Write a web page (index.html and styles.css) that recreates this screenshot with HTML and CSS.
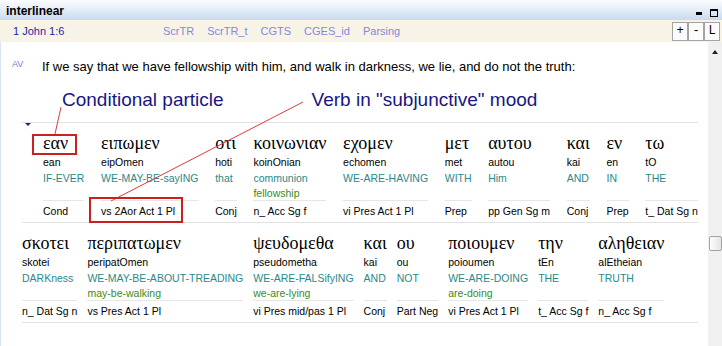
FILE: index.html
```html
<!DOCTYPE html>
<html>
<head>
<meta charset="utf-8">
<title>interlinear</title>
<link rel="stylesheet" href="styles.css">
</head>
<body>
<div class="panel">
  <div class="titlebar">
    <span class="title">interlinear</span>
    <span class="winbtns"><i class="wmin"></i><i class="wmax"></i></span>
  </div>
  <div class="toolbar">
    <span class="ref">1 John 1:6</span>
    <nav class="tabs">
      <span>ScrTR</span><span>ScrTR_t</span><span>CGTS</span><span>CGES_id</span><span>Parsing</span>
    </nav>
    <div class="zbtns"><span class="zb">+</span><span class="zb">-</span><span class="zb">L</span></div>
  </div>
  <div class="main">
    <div class="content">
      <div class="verse"><span class="av">AV</span><span class="vtext">If we say that we have fellowship with him, and walk in darkness, we lie, and do not the truth:</span></div>
      <div class="labels"><span class="lab">Conditional particle</span><span class="lab lab2">Verb in "subjunctive" mood</span></div>
      <div class="inter">
        <div class="row row1">
          <div class="col"><div class="gk">εαν</div><div class="tr">ean</div><div class="gl">IF-EVER</div><div class="alt"></div><div class="ps">Cond</div></div>
          <div class="col"><div class="gk">ειπωμεν</div><div class="tr">eipOmen</div><div class="gl">WE-MAY-BE-sayING</div><div class="alt"></div><div class="ps">vs 2Aor Act 1 Pl</div></div>
          <div class="col"><div class="gk">οτι</div><div class="tr">hoti</div><div class="gl">that</div><div class="alt"></div><div class="ps">Conj</div></div>
          <div class="col"><div class="gk">κοινωνιαν</div><div class="tr">koinOnian</div><div class="gl">communion</div><div class="alt">fellowship</div><div class="ps">n_ Acc Sg f</div></div>
          <div class="col"><div class="gk">εχομεν</div><div class="tr">echomen</div><div class="gl">WE-ARE-HAVING</div><div class="alt"></div><div class="ps">vi Pres Act 1 Pl</div></div>
          <div class="col"><div class="gk">μετ</div><div class="tr">met</div><div class="gl">WITH</div><div class="alt"></div><div class="ps">Prep</div></div>
          <div class="col"><div class="gk">αυτου</div><div class="tr">autou</div><div class="gl">Him</div><div class="alt"></div><div class="ps">pp Gen Sg m</div></div>
          <div class="col"><div class="gk">και</div><div class="tr">kai</div><div class="gl">AND</div><div class="alt"></div><div class="ps">Conj</div></div>
          <div class="col"><div class="gk">εν</div><div class="tr">en</div><div class="gl">IN</div><div class="alt"></div><div class="ps">Prep</div></div>
          <div class="col"><div class="gk">τω</div><div class="tr">tO</div><div class="gl">THE</div><div class="alt"></div><div class="ps">t_ Dat Sg n</div></div>
        </div>
        <div class="row row2">
          <div class="col"><div class="gk">σκοτει</div><div class="tr">skotei</div><div class="gl">DARKness</div><div class="alt"></div><div class="ps">n_ Dat Sg n</div></div>
          <div class="col"><div class="gk">περιπατωμεν</div><div class="tr">peripatOmen</div><div class="gl">WE-MAY-BE-ABOUT-TREADING</div><div class="alt">may-be-walking</div><div class="ps">vs Pres Act 1 Pl</div></div>
          <div class="col"><div class="gk">ψευδομεθα</div><div class="tr">pseudometha</div><div class="gl">WE-ARE-FALSifyING</div><div class="alt">we-are-lying</div><div class="ps">vi Pres mid/pas 1 Pl</div></div>
          <div class="col"><div class="gk">και</div><div class="tr">kai</div><div class="gl">AND</div><div class="alt"></div><div class="ps">Conj</div></div>
          <div class="col"><div class="gk">ου</div><div class="tr">ou</div><div class="gl">NOT</div><div class="alt"></div><div class="ps">Part Neg</div></div>
          <div class="col"><div class="gk">ποιουμεν</div><div class="tr">poioumen</div><div class="gl">WE-ARE-DOING</div><div class="alt">are-doing</div><div class="ps">vi Pres Act 1 Pl</div></div>
          <div class="col"><div class="gk">την</div><div class="tr">tEn</div><div class="gl">THE</div><div class="alt"></div><div class="ps">t_ Acc Sg f</div></div>
          <div class="col"><div class="gk">αληθειαν</div><div class="tr">alEtheian</div><div class="gl">TRUTH</div><div class="alt"></div><div class="ps">n_ Acc Sg f</div></div>
        </div>
      </div>
    </div>
    <div class="scroll"><i class="sup"></i><i class="thumb"></i></div>
  </div>
  <svg class="annot" width="722" height="346" viewBox="0 0 722 346">
    <line x1="61" y1="107" x2="55" y2="134" stroke="#e03a3a" stroke-width="1"/>
    <line x1="303" y1="102" x2="111" y2="201" stroke="#e03a3a" stroke-width="1"/>
    <rect x="33" y="135" width="43" height="19" fill="none" stroke="#cc1f1f" stroke-width="2"/>
    <rect x="90" y="198" width="92" height="24" fill="none" stroke="#cc1f1f" stroke-width="2"/>
  </svg>
</div>
</body>
</html>
```
FILE: styles.css
```css
* { box-sizing: border-box; }
html, body { margin: 0; padding: 0; }
body {
  width: 722px;
  height: 346px;
  overflow: hidden;
  background: #fff;
  font-family: "Liberation Sans", Arial, sans-serif;
  color: #000;
}
.panel { position: relative; width: 722px; height: 346px; display: flex; flex-direction: column; }

.titlebar {
  height: 20px;
  flex: none;
  display: flex;
  align-items: flex-start;
  justify-content: space-between;
  padding: 0 4px 0 6px;
  background: linear-gradient(to bottom, #fbfdff 0%, #e6eef9 45%, #c8daf1 100%);
}
.title { font-weight: bold; font-size: 12px; line-height: 20px; padding-top: 1px; }
.winbtns { display: flex; align-items: center; gap: 8px; padding-top: 9px; }
.wmin { display: block; width: 6px; height: 3px; background: #000; margin-top: 1px; }
.wmax { display: block; width: 8px; height: 8px; border: 1px solid #000; border-top-width: 2px; }

.toolbar {
  height: 22px;
  flex: none;
  display: flex;
  align-items: center;
  background: #f7f4e7;
  font-size: 11px;
}
.ref { flex: 0 0 163px; padding-left: 13px; color: #1e1ea6; line-height: 22px; }
.tabs { display: flex; gap: 13px; color: #8686df; }
.zbtns { margin-left: auto; margin-right: 2px; align-self: flex-start; margin-top: 2px; display: flex; }
.zb {
  width: 16px; height: 19px;
  border: 1px solid #a4a4a4;
  background: #fcfcfc;
  font-family: "Liberation Mono", "Courier New", monospace;
  font-size: 12px;
  line-height: 17px;
  text-align: center;
}

.main { flex: 1; display: flex; min-height: 0; }
.content { flex: 1; border-left: 1px solid #d9e4f3; }
.scroll { width: 14px; flex: none; background: #f0f0f0; display: flex; flex-direction: column; align-items: center; }
.sup { display: block; width: 0; height: 0; margin-top: 8px; border-left: 3.5px solid transparent; border-right: 3.5px solid transparent; border-bottom: 4px solid #222; }
.thumb {
  display: block; width: 13px; height: 15px; margin-top: 182px; margin-left: 1px;
  border: 1px solid #a2a2a2; border-radius: 2px;
  background: linear-gradient(to right, #fdfdfd, #e4e4e4);
}

.verse { display: flex; margin-top: 17px; padding-left: 11px; height: 16px; }
.av { width: 30px; font-size: 9px; line-height: 12px; color: #7d7dd6; margin-top: -1px; }
.vtext { font-size: 13px; line-height: 16px; white-space: nowrap; }

.labels { display: flex; margin-top: 14px; padding-left: 61px; font-size: 19px; line-height: 22px; color: #161683; white-space: nowrap; }
.lab2 { margin-left: 88px; }

.inter { position: relative; margin: 11px 10px 0 21px; border-top: 1px solid #e2e2e2; }
.inter::before {
  content: ""; position: absolute; left: 3px; top: 0;
  border-left: 3px solid transparent; border-right: 3px solid transparent; border-top: 3px solid #1c1c9e;
}
.row { display: flex; padding: 9px 0 3px; border-bottom: 1px solid #e2e2e2; }
.row1 { justify-content: space-between; padding-left: 21px; }
.row2 { gap: 10px; }
.col { display: flex; flex-direction: column; white-space: nowrap; }
.gk { font-family: "Liberation Serif", "Times New Roman", serif; font-size: 18px; line-height: 22px; }
.tr, .gl, .ps { font-size: 10.5px; line-height: 16px; }
.gl { color: #2a8989; }
.alt { font-size: 10.5px; line-height: 14px; height: 14px; color: #3a8a22; }
.ps { border-top: 1px solid #e6e6e6; padding-top: 2px; }

.annot { position: absolute; left: 0; top: 0; pointer-events: none; }
```
